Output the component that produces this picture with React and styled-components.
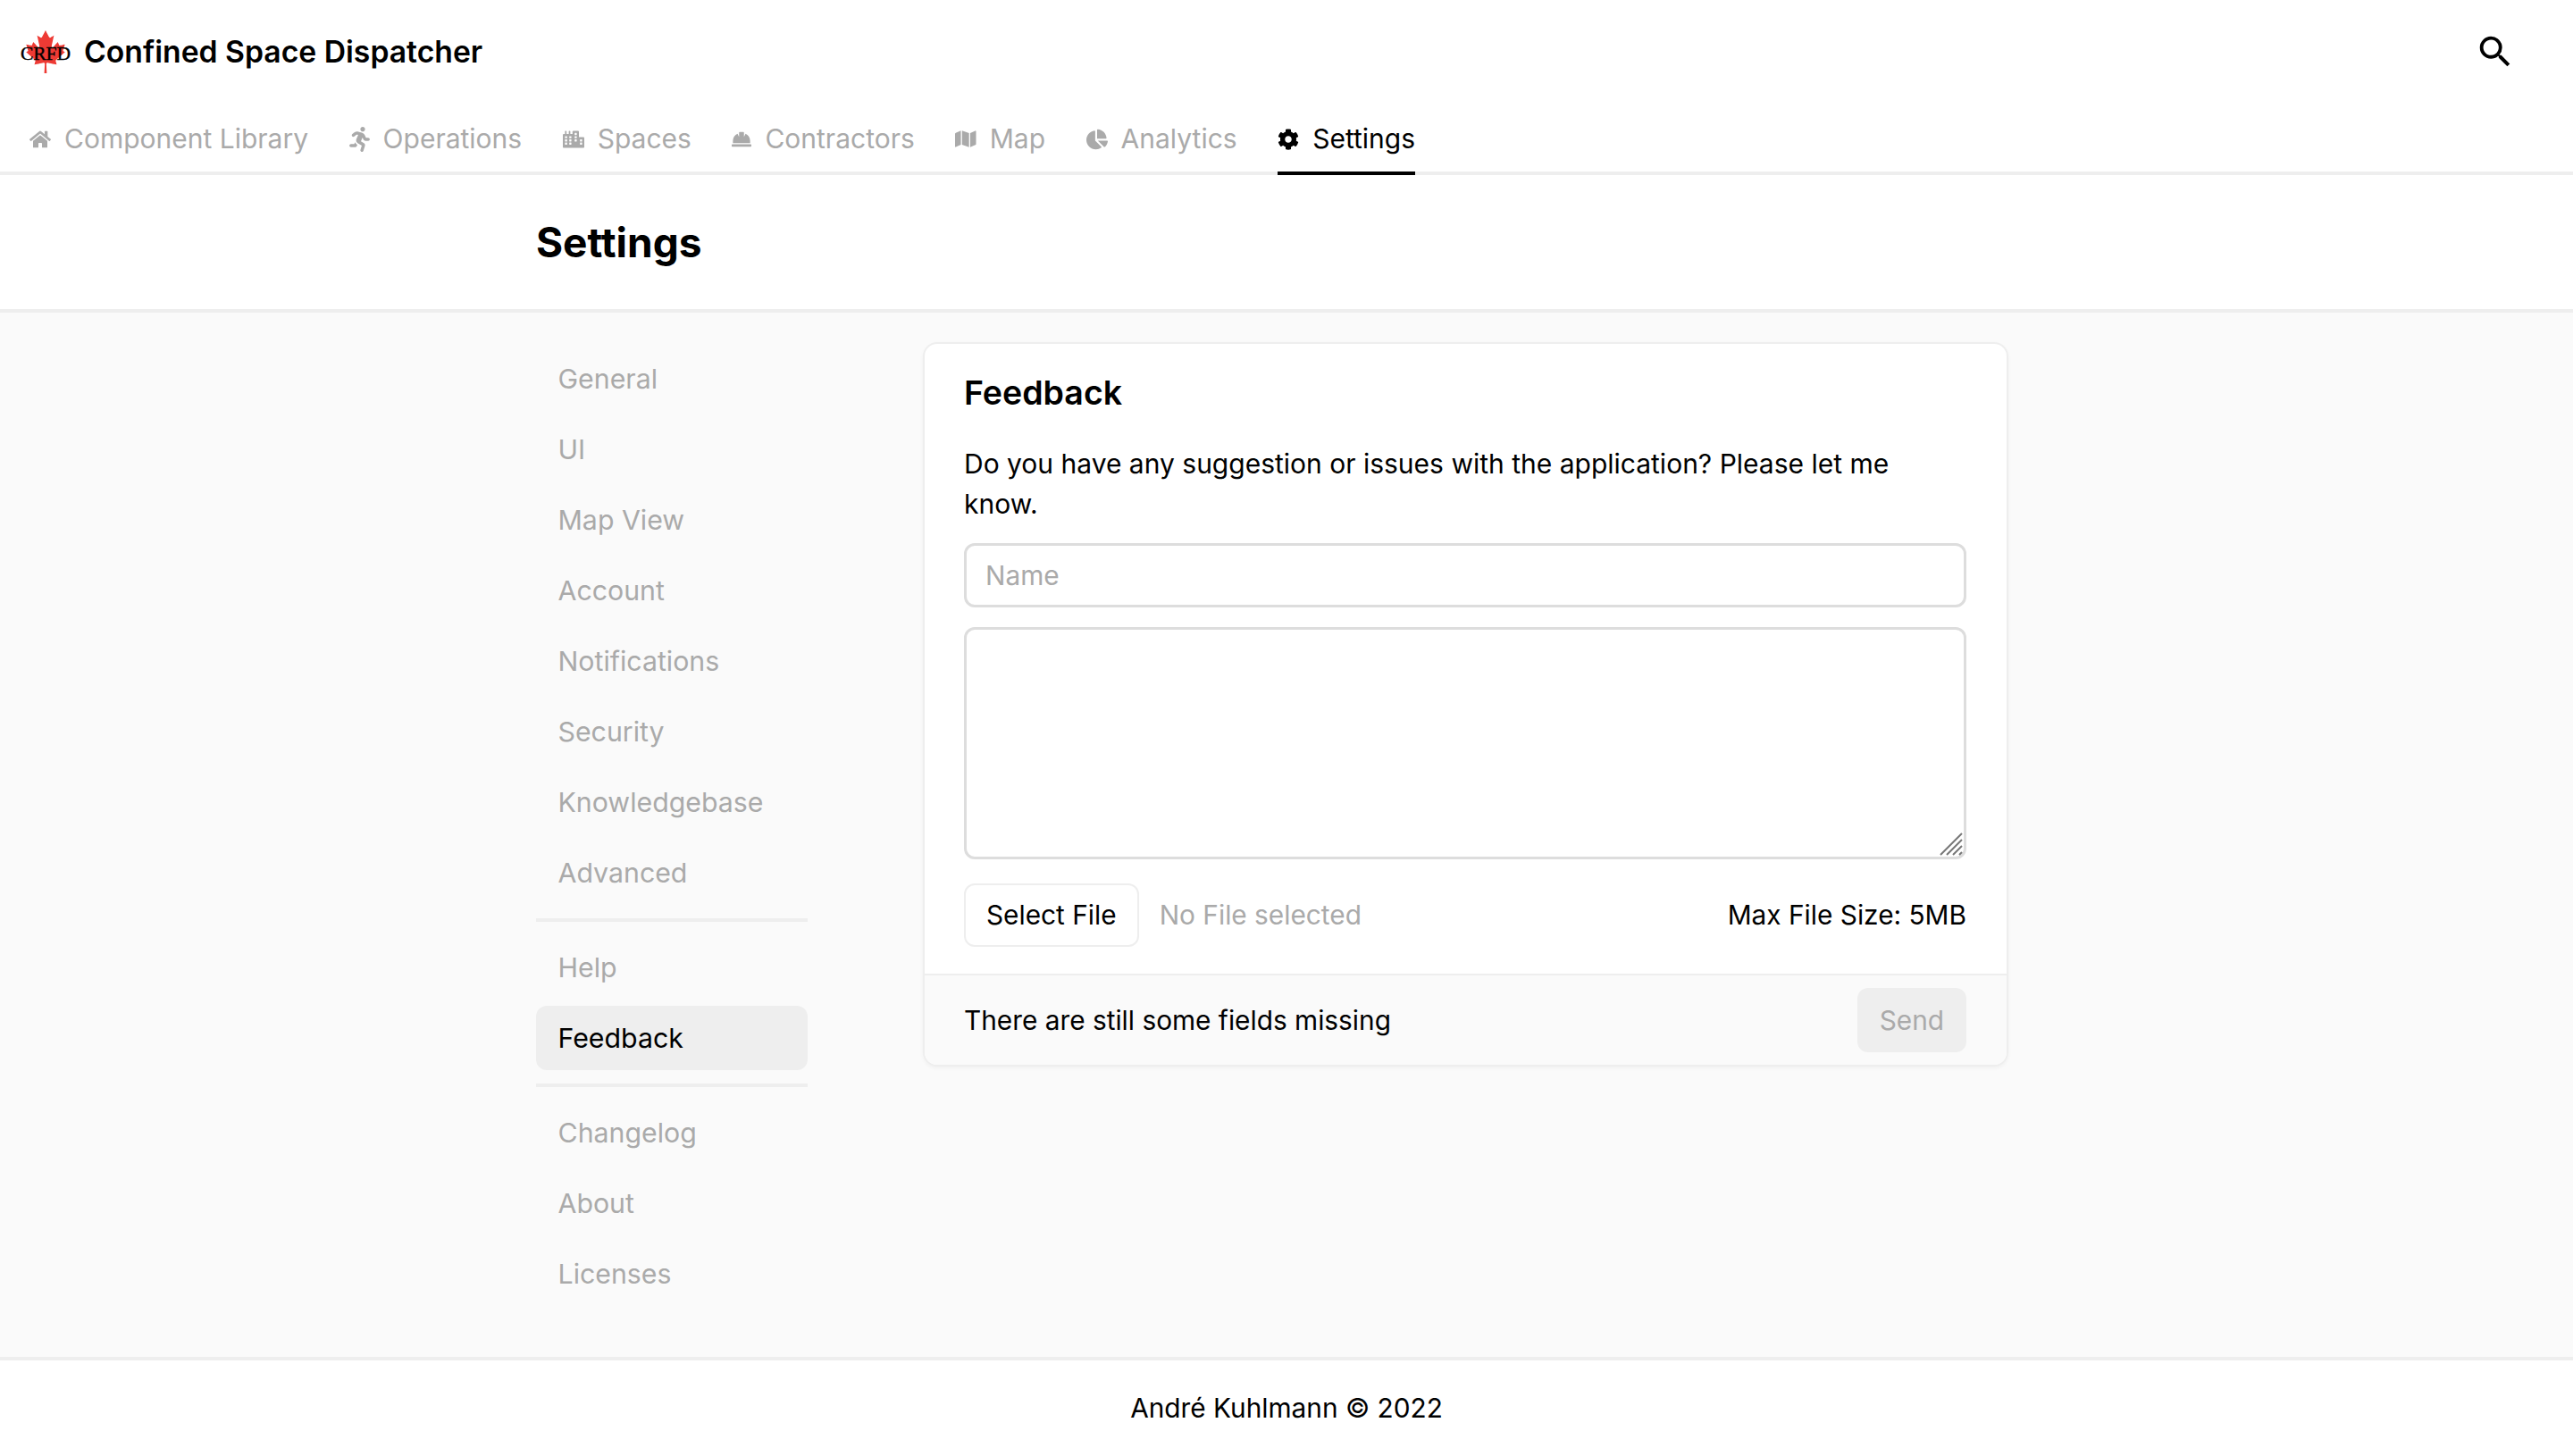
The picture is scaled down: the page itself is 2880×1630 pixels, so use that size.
import { Fragment } from 'react'
import styled, { createGlobalStyle } from 'styled-components'
import { FaHome, FaRunning, FaCity, FaHardHat, FaMap, FaChartPie, FaCog, FaCanadianMapleLeaf } from 'react-icons/fa'
import { MdSearch } from 'react-icons/md'

const GlobalStyle = createGlobalStyle`
  html, body {
    margin: 0;
    padding: 0;
  }
  body {
    font-family: Inter, sans-serif;
    font-size: 29.8px;
    line-height: 45px;
    color: #000;
    background: #fff;
  }
  * {
    box-sizing: border-box;
  }
`

const Page = styled.div`
  display: flex;
  flex-direction: column;
  height: 1630px;
`

const Header = styled.header`
  flex: none;
  background: #fff;
  height: 196px;
  box-shadow: inset 0 -4px 0 #eee;
  display: flex;
  flex-direction: column;
`

const TopBar = styled.div`
  flex: none;
  height: 115px;
  display: flex;
  align-items: center;
  justify-content: space-between;
  padding: 0 64px 0 22px;
`

const Brand = styled.div`
  display: flex;
  align-items: center;
  gap: 14px;
  font-size: 33.7px;
  font-weight: 600;
`

const Logo = styled.div`
  position: relative;
  width: 58px;
  height: 50px;
  display: flex;
  align-items: center;
  justify-content: center;
  color: #ee3a34;
  font-size: 48px;

  svg {
    display: block;
  }
`

const LogoText = styled.span`
  position: absolute;
  left: -2px;
  right: -2px;
  top: 7px;
  bottom: 0;
  display: flex;
  align-items: center;
  justify-content: center;
  font-family: 'Liberation Serif', serif;
  font-size: 21.5px;
  font-weight: 400;
  line-height: 1;
  color: #000;
  -webkit-text-stroke: 0.4px #000;
`

const SearchButton = styled.div`
  display: flex;
  color: #000;
  font-size: 46px;
`

const Tabs = styled.nav`
  flex: none;
  display: flex;
  gap: 45.5px;
  padding-left: 33px;
  height: 81px;
  font-size: 30px;
`

const Tab = styled.a`
  display: flex;
  align-items: center;
  gap: 15px;
  height: 81px;
  padding-top: 4px;
  color: ${(p) => (p.$active ? '#000' : '#aaa')};
  border-bottom: 4px solid ${(p) => (p.$active ? '#000' : 'transparent')};

  svg {
    width: ${(p) => p.$iconWidth}px;
    height: ${(p) => p.$iconHeight}px;
    flex: none;
  }
`

const TitleBar = styled.div`
  flex: none;
  background: #fff;
  border-bottom: 4px solid #eee;
  height: 154px;
  padding-left: 600px;
  display: flex;
  align-items: center;
`

const PageTitle = styled.h1`
  margin: 0;
  font-size: 46px;
  font-weight: 700;
  line-height: 1;
`

const Content = styled.main`
  flex: 1;
  background: #fafafa;
  padding: 33px 0 0 600px;
  display: flex;
  align-items: flex-start;
  gap: 129px;
`

const Sidebar = styled.aside`
  width: 304px;
  margin-top: 5px;
  display: flex;
  flex-direction: column;
  gap: 7px;
  font-size: 30.3px;
`

const NavItem = styled.a`
  display: block;
  height: 72px;
  line-height: 72px;
  padding: 0 24.5px;
  border-radius: 12px;
  color: ${(p) => (p.$active ? '#000' : '#aaa')};
  background: ${(p) => (p.$active ? '#eee' : 'transparent')};
`

const NavDivider = styled.div`
  height: 4px;
  background: #eee;
  margin: 8px 0;
`

const Card = styled.section`
  width: 1215px;
  background: #fff;
  border: 2px solid #eee;
  border-radius: 16px;
  overflow: hidden;
  box-shadow: 0 2px 4px rgba(0, 0, 0, 0.04);
`

const CardBody = styled.div`
  padding: 27px 45px 30px 44px;
  display: flex;
  flex-direction: column;
`

const CardTitle = styled.h2`
  margin: 0 0 29px;
  font-size: 37.5px;
  font-weight: 600;
  line-height: 56px;
`

const Description = styled.p`
  margin: 0 0 21px;
  padding-right: 40px;
  font-size: 30px;
`

const NameInput = styled.input`
  width: 100%;
  height: 72px;
  padding: 0 21px;
  border: 3px solid #ddd;
  border-radius: 12px;
  font: inherit;
  color: #000;
  outline: none;
  background: #fff;

  &::placeholder {
    color: #aaa;
    opacity: 1;
  }
`

const MessageWrap = styled.div`
  position: relative;
  margin: 22px 0 27px;
`

const MessageInput = styled.textarea`
  display: block;
  width: 100%;
  height: 260px;
  padding: 16px 21px;
  border: 3px solid #ddd;
  border-radius: 12px;
  font: inherit;
  outline: none;
  background: #fff;
  resize: none;
`

const ResizeHandle = styled.svg`
  position: absolute;
  right: 4px;
  bottom: 4px;
  width: 26px;
  height: 26px;
`

const FileRow = styled.div`
  display: flex;
  align-items: center;
  justify-content: space-between;
`

const FilePicker = styled.div`
  display: flex;
  align-items: center;
  gap: 23px;
`

const SelectButton = styled.button`
  height: 71px;
  padding: 0 23px;
  background: #fff;
  border: 2px solid #eee;
  border-radius: 12px;
  font: inherit;
  color: #000;
`

const Muted = styled.span`
  color: #aaa;
`

const CardFooter = styled.div`
  background: #fafafa;
  border-top: 2px solid #eee;
  height: 102px;
  padding: 0 45px 0 44px;
  display: flex;
  align-items: center;
  justify-content: space-between;
`

const SendButton = styled.button`
  height: 72px;
  padding: 0 25px;
  background: #eee;
  border: 0;
  border-radius: 12px;
  font: inherit;
  color: #aaa;
`

const Footer = styled.footer`
  flex: none;
  background: #fff;
  border-top: 4px solid #eee;
  height: 111px;
  display: flex;
  align-items: center;
  justify-content: center;
`

const tabs = [
  { label: 'Component Library', icon: FaHome, w: 24, h: 24 },
  { label: 'Operations', icon: FaRunning, w: 23, h: 28 },
  { label: 'Spaces', icon: FaCity, w: 24, h: 24 },
  { label: 'Contractors', icon: FaHardHat, w: 22, h: 22 },
  { label: 'Map', icon: FaMap, w: 23.5, h: 21 },
  { label: 'Analytics', icon: FaChartPie, w: 24, h: 24 },
  { label: 'Settings', icon: FaCog, w: 24, h: 24, active: true },
]

const navGroups = [
  ['General', 'UI', 'Map View', 'Account', 'Notifications', 'Security', 'Knowledgebase', 'Advanced'],
  ['Help', 'Feedback'],
  ['Changelog', 'About', 'Licenses'],
]

export default function App() {
  return (
    <Page>
      <GlobalStyle />
      <Header>
        <TopBar>
          <Brand>
            <Logo>
              <FaCanadianMapleLeaf />
              <LogoText>CRFD</LogoText>
            </Logo>
            Confined Space Dispatcher
          </Brand>
          <SearchButton>
            <MdSearch />
          </SearchButton>
        </TopBar>
        <Tabs>
          {tabs.map(({ label, icon: Icon, w, h, active }) => (
            <Tab key={label} $active={active} $iconWidth={w} $iconHeight={h}>
              <Icon />
              {label}
            </Tab>
          ))}
        </Tabs>
      </Header>
      <TitleBar>
        <PageTitle>Settings</PageTitle>
      </TitleBar>
      <Content>
        <Sidebar>
          {navGroups.map((group, i) => (
            <Fragment key={group[0]}>
              {i > 0 && <NavDivider />}
              {group.map((item) => (
                <NavItem key={item} $active={item === 'Feedback'}>
                  {item}
                </NavItem>
              ))}
            </Fragment>
          ))}
        </Sidebar>
        <Card>
          <CardBody>
            <CardTitle>Feedback</CardTitle>
            <Description>
              Do you have any suggestion or issues with the application? Please let me know.
            </Description>
            <NameInput placeholder="Name" />
            <MessageWrap>
              <MessageInput />
              <ResizeHandle viewBox="0 0 26 26" stroke="#777" strokeWidth="2">
                <path d="M1 25 25 1M8 25 25 8M15 25 25 15M22 25 25 22" />
              </ResizeHandle>
            </MessageWrap>
            <FileRow>
              <FilePicker>
                <SelectButton>Select File</SelectButton>
                <Muted>No File selected</Muted>
              </FilePicker>
              <span>Max File Size: 5MB</span>
            </FileRow>
          </CardBody>
          <CardFooter>
            <span>There are still some fields missing</span>
            <SendButton>Send</SendButton>
          </CardFooter>
        </Card>
      </Content>
      <Footer>André Kuhlmann © 2022</Footer>
    </Page>
  )
}
